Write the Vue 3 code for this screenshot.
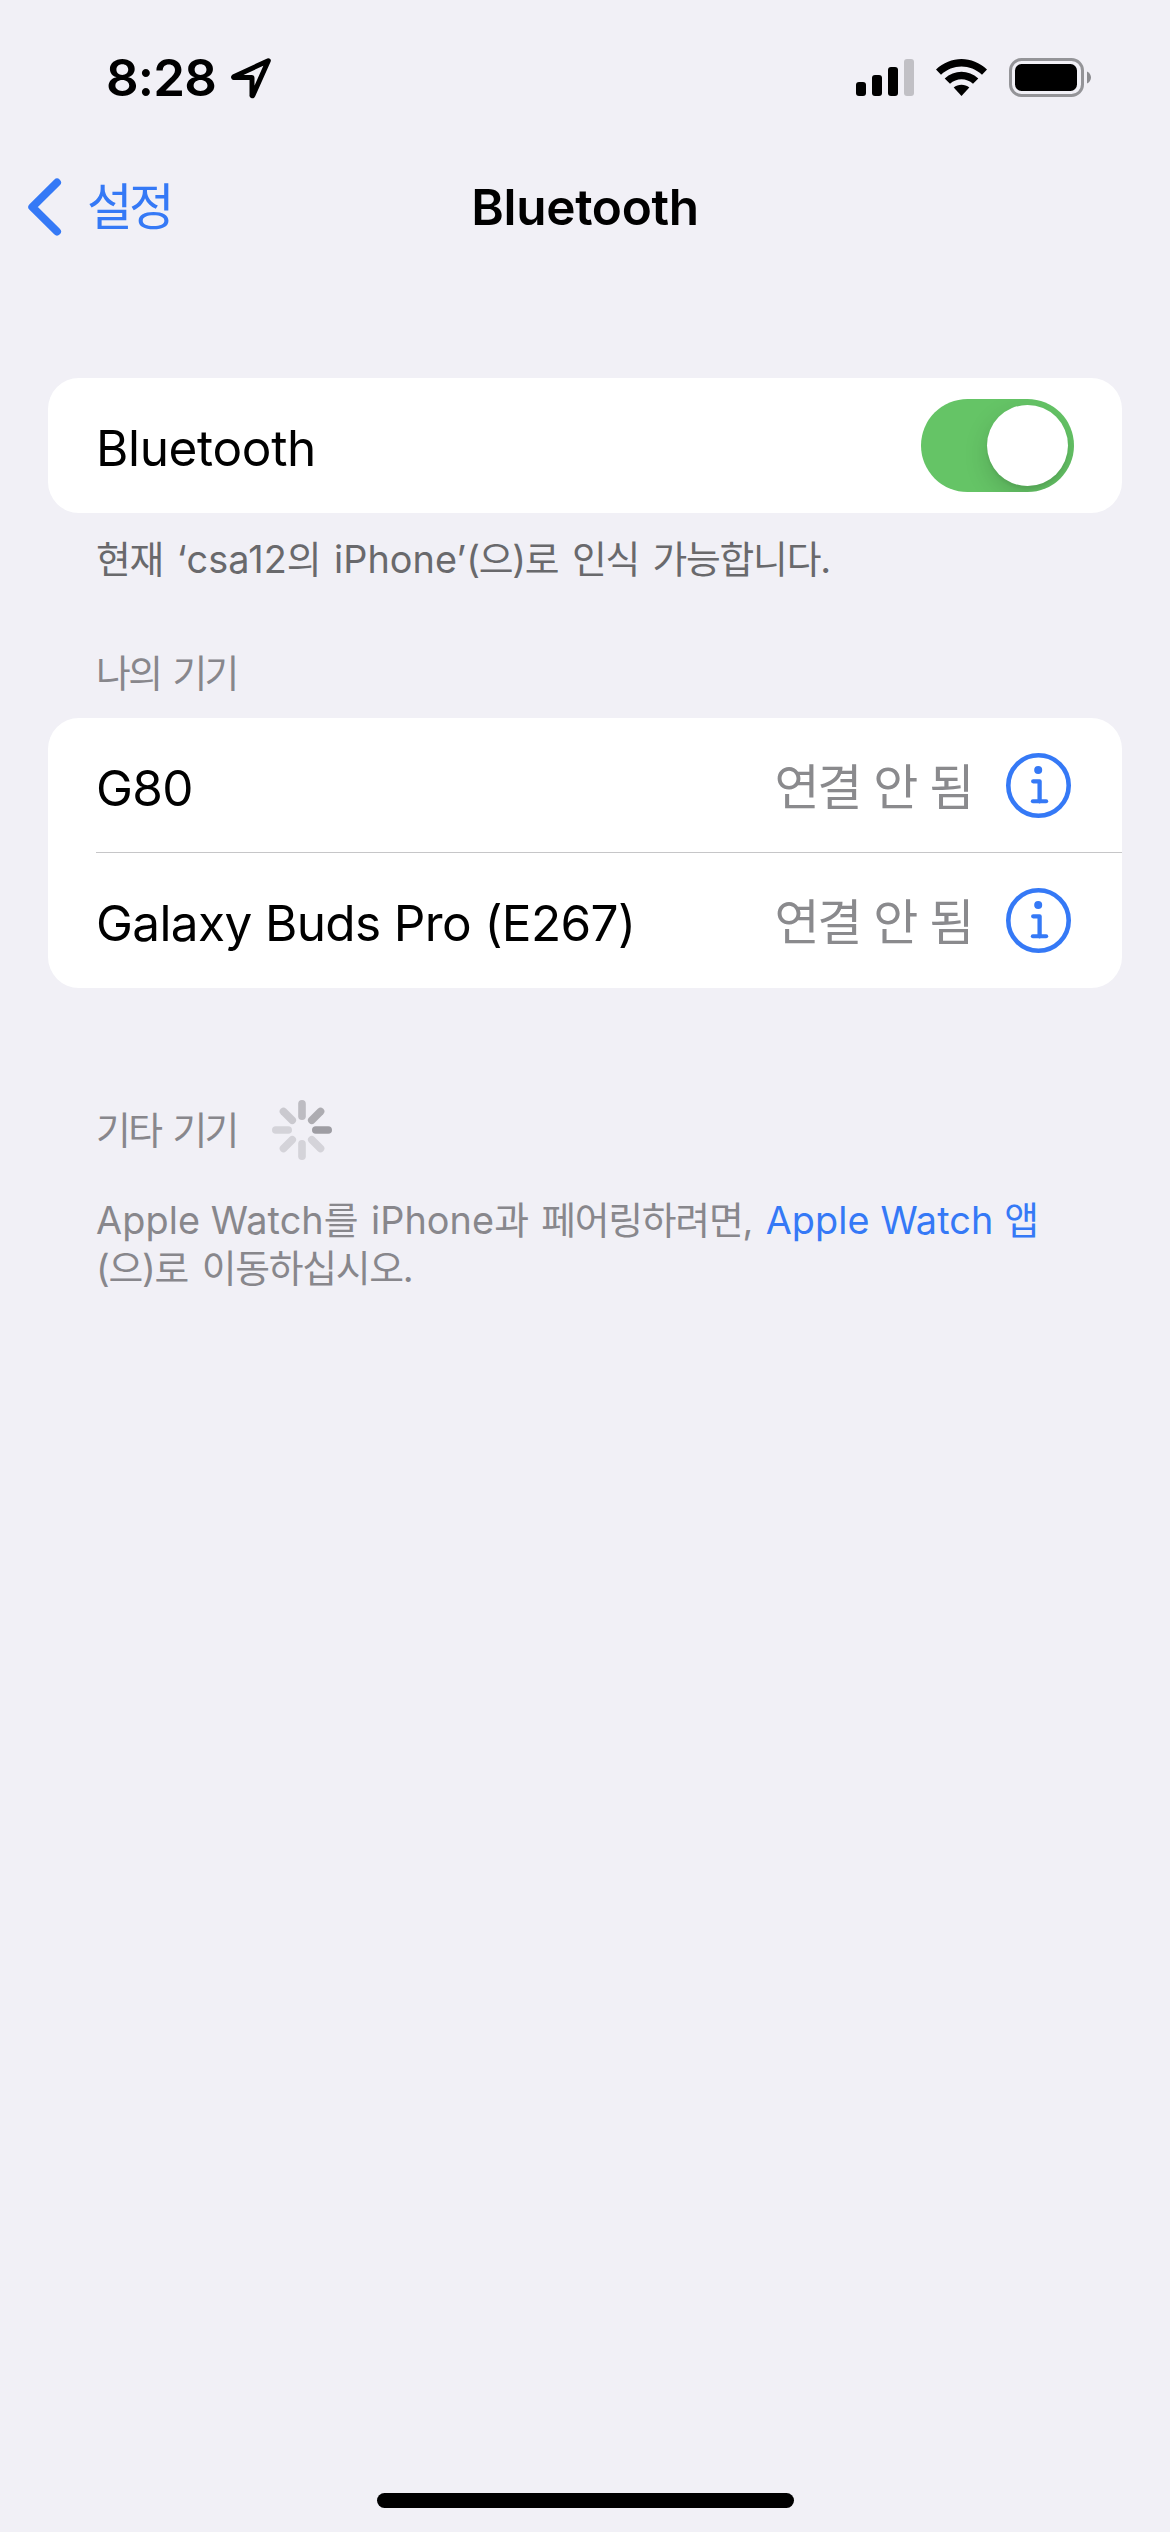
<script setup>
import { ref } from 'vue'

const enabled = ref(true)
const devices = [
  { name: 'G80', status: '연결 안 됨' },
  { name: 'Galaxy Buds Pro (E267)', status: '연결 안 됨' },
]
const bars = [
  { x: 0, h: 14 },
  { x: 16, h: 21 },
  { x: 32, h: 29 },
  { x: 48, h: 37 },
]
const spokes = ['#bdbcc2', '#adacb1', '#9e9da3', '#d4d3d9', '#d4d3d9', '#d4d3d9', '#d4d3d9', '#cac9cf']
</script>

<template>
  <div class="screen">
    <header class="status-bar">
      <span class="time">8:28</span>
      <svg class="location" width="44" height="44" viewBox="0 0 44 44">
        <path d="M39.3 4.7 4.7 20.8a.4.4 0 0 0 .2.7H22.5a.5.5 0 0 1 .5.5V39.3a.4.4 0 0 0 .8.2Z" fill="none" stroke="#000" stroke-width="5" stroke-linejoin="round" />
      </svg>
      <svg class="signal" width="58" height="37" viewBox="0 0 58 37">
        <rect v-for="(b, i) in bars" :key="i" :x="b.x" :y="37 - b.h" width="10" :height="b.h" rx="3" :fill="i < 3 ? '#000' : '#c1c0c5'" />
      </svg>
      <svg class="wifi" width="51" height="38" viewBox="0 0 51 38">
        <path d="M0 10.6C14.500-3.500 36.500-3.500 51 10.600L46 15.700C34.300 4.600 16.700 4.600 5 15.700Z" />
        <path d="M8.700 19.400C18.300 10.600 32.700 10.600 42.300 19.400L37 24.700C30.500 18.700 20.500 18.700 14 24.700Z" />
        <path d="M17.700 28.500C22 24.700 29 24.700 33.300 28.500L25.500 37Z" />
      </svg>
      <svg class="battery" width="83" height="39" viewBox="0 0 83 39">
        <rect x="1.500" y="1.500" width="72" height="36" rx="11" fill="none" stroke="#949498" stroke-width="3" />
        <rect x="6" y="6" width="62" height="27" rx="6.500" />
        <path d="M78 13.500C80.500 14.500 82 17 82 19.500S80.500 24.500 78 25.500Z" fill="#8c8c90" />
      </svg>
    </header>

    <nav class="nav">
      <a class="back">
        <svg width="34" height="58" viewBox="0 0 34 58">
          <path d="M29 4.500 4.300 29 29 53.500" fill="none" stroke="#3579f6" stroke-width="8" stroke-linecap="round" stroke-linejoin="round" />
        </svg>
        <span class="back-label">설정</span>
      </a>
      <h1 class="title">Bluetooth</h1>
    </nav>

    <main>
      <section class="card">
        <div class="row">
          <span class="name">Bluetooth</span>
          <button class="switch" :class="{ on: enabled }" @click="enabled = !enabled"><i class="knob"></i></button>
        </div>
      </section>
      <p class="note dark"><span class="ko">현재 </span><span class="en">‘csa12</span><span class="ko">의 </span><span class="en">iPhone’</span><span class="ko">(으)로 인식 가능합니다.</span></p>

      <h2 class="heading">나의 기기</h2>
      <section class="card">
        <div v-for="d in devices" :key="d.name" class="row device">
          <span class="name">{{ d.name }}</span>
          <span class="state">{{ d.status }}</span>
          <svg class="info" width="65" height="65" viewBox="0 0 65 65" fill="none" stroke="#3579f6" stroke-linecap="round" stroke-linejoin="round">
            <circle cx="32.500" cy="32.500" r="30.200" stroke-width="4.600" />
            <circle cx="32.200" cy="17" r="4" fill="#3579f6" stroke="none" />
            <path d="M27.200 28.300H33.600V48.300" stroke-width="4.300" />
            <path d="M26.800 48.300H40.200" stroke-width="4" />
          </svg>
        </div>
      </section>

      <div class="other">
        <h2 class="heading">기타 기기</h2>
        <svg class="spinner" width="60" height="60" viewBox="-30 -30 60 60">
          <rect v-for="(c, i) in spokes" :key="i" x="-3.800" y="-30" width="7.600" height="20" rx="3.800" :fill="c" :transform="`rotate(${i * 45})`" />
        </svg>
      </div>
      <p class="note"><span class="en">Apple Watch</span><span class="ko">를 </span><span class="en">iPhone</span><span class="ko">과 페어링하려면, </span><a class="link"><span class="en">Apple Watch </span><span class="ko">앱</span></a><br /><span class="ko">(으)로 이동하십시오.</span></p>
    </main>

    <div class="home-indicator"></div>
  </div>
</template>

<style>
body {
  margin: 0;
  background: #f1f0f6;
}
</style>

<style scoped>
.screen {
  box-sizing: border-box;
  width: 1170px;
  height: 2532px;
  display: flex;
  flex-direction: column;
  background: #f1f0f6;
  color: #000;
  font-family: Inter, "Noto Sans CJK KR", sans-serif;
  overflow: hidden;
}
h1, h2, p { margin: 0; font-weight: 400; }
svg { display: block; flex: none; }

.status-bar {
  display: flex;
  height: 150px;
  box-sizing: border-box;
  padding: 56px 78px 0 106px;
}
.time {
  width: 123px;
  font-size: 51px;
  line-height: 44px;
  font-weight: 600;
  letter-spacing: -0.8px;
  white-space: nowrap;
}
.signal { margin: 3px 22px 0 auto; }
.wifi { margin: 3px 22px 0 0; }
.battery { margin-top: 2px; }

.nav {
  display: grid;
  grid-template-columns: 1fr auto 1fr;
  align-items: center;
  height: 114px;
  padding: 0 28px;
}
.back {
  display: flex;
  align-items: center;
  gap: 25px;
  color: #3579f6;
}
.back-label {
  font-size: 49.5px;
  line-height: 60px;
  letter-spacing: -3.5px;
}
.title {
  font-size: 49.5px;
  line-height: 60px;
  font-weight: 600;
  letter-spacing: -0.3px;
}

main { padding: 114px 48px 0; }
.card {
  border-radius: 31px;
  background: #fff;
}
.row {
  display: flex;
  align-items: center;
  height: 135px;
  padding: 0 48px;
}
.name {
  flex: 1;
  padding-top: 4px;
  font-size: 49.5px;
  line-height: 60px;
  letter-spacing: -0.35px;
}
.device {
  position: relative;
  padding-right: 51px;
}
.device .name { letter-spacing: -0.62px; }
.device + .device::before {
  content: "";
  position: absolute;
  top: -1px;
  left: 48px;
  right: 0;
  height: 1px;
  background: #c6c6c8;
}
.state {
  padding-top: 4px;
  margin-right: 34px;
  color: #8a8a8d;
  font-size: 49px;
  line-height: 60px;
  letter-spacing: -2.4px;
  word-spacing: 2px;
}
.switch {
  width: 153px;
  height: 93px;
  display: flex;
  padding: 6px;
  border: 0;
  border-radius: 47px;
  background: #e9e9ea;
  overflow: hidden;
}
.switch.on {
  justify-content: flex-end;
  background: #65c466;
}
.knob {
  width: 81px;
  height: 81px;
  border-radius: 50%;
  background: #fff;
  box-shadow: 0 9px 24px rgba(0, 0, 0, 0.15), 0 3px 3px rgba(0, 0, 0, 0.06);
}

.note {
  padding: 0 48px;
  color: #88878c;
  font-size: 37.8px;
  line-height: 48px;
  white-space: nowrap;
}
.note.dark {
  margin-top: 22px;
  color: #69696c;
}
.en { letter-spacing: 0.1px; }
.ko {
  letter-spacing: -1.25px;
  word-spacing: 4.2px;
}
.link { color: #3579f6; }
.heading {
  height: 48px;
  padding: 0 48px;
  color: #88878c;
  font-size: 37.8px;
  line-height: 48px;
  letter-spacing: -2.6px;
  word-spacing: 4px;
}
.note.dark + .heading { margin: 66px 0 21px; }
.other {
  display: flex;
  align-items: center;
  margin: 112px 0 36px;
}
.other .heading { padding-right: 35px; }

.home-indicator {
  width: 417px;
  height: 15px;
  margin: auto auto 24px;
  border-radius: 8px;
  background: #000;
}
</style>
